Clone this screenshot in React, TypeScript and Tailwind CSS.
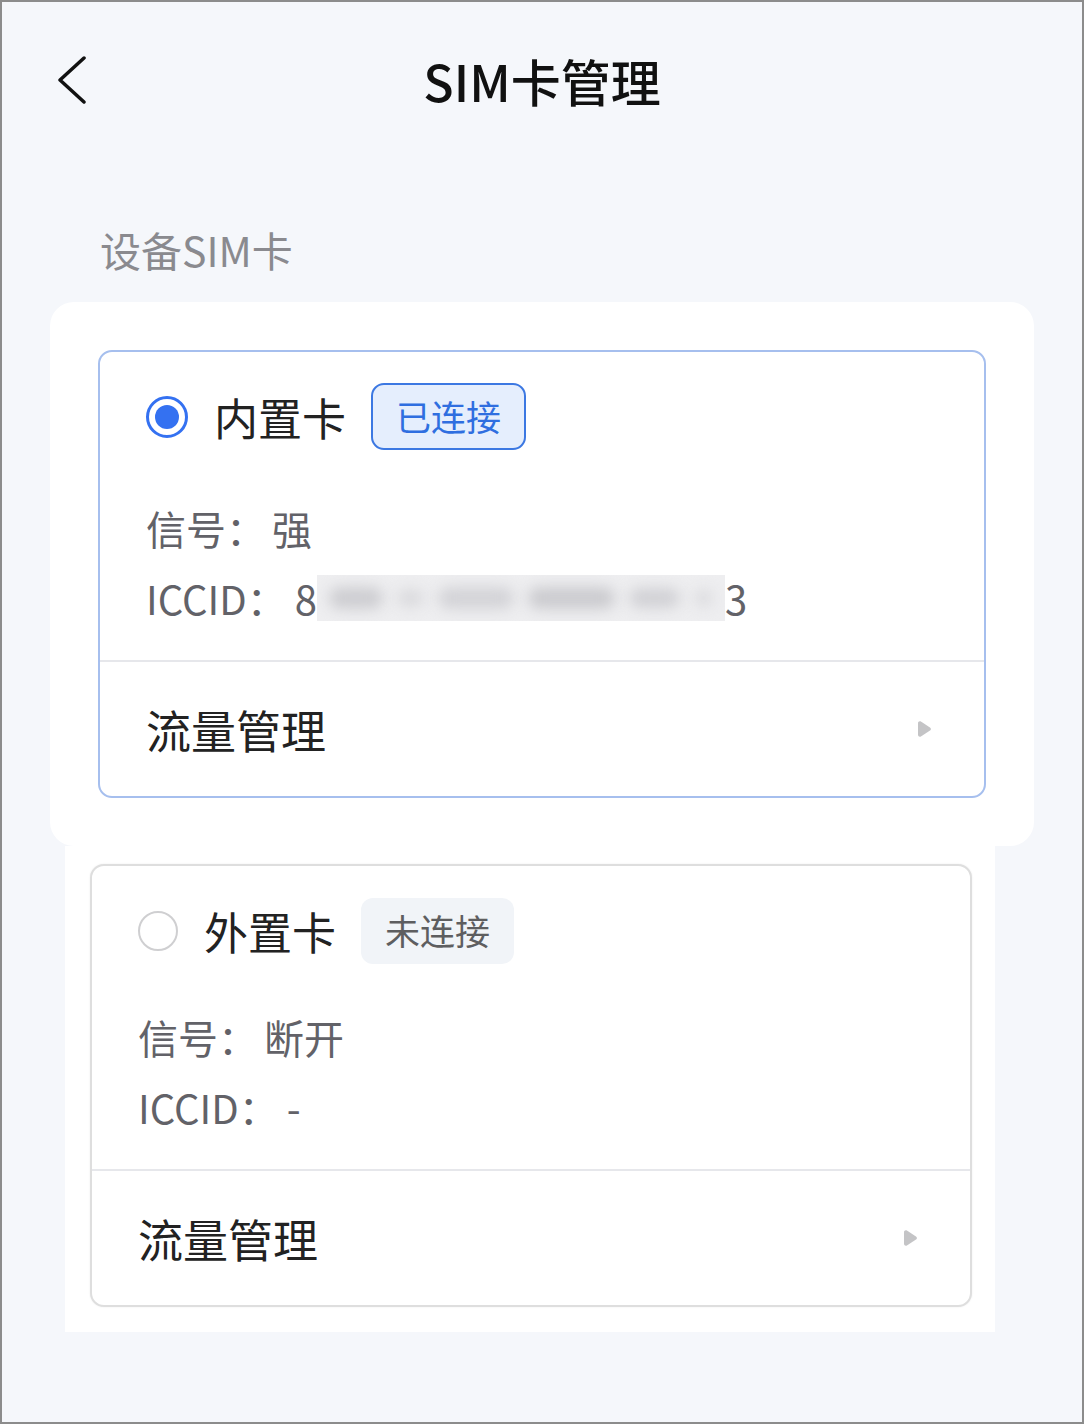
import React from 'react';

const font = { fontFamily: '"Noto Sans CJK SC", "Noto Sans", sans-serif' };

function Triangle() {
  return (
    <svg width="16" height="18" viewBox="0 0 16 18" className="shrink-0">
      <path d="M2 3.2 C2 1.6 3.6 0.8 4.9 1.6 L14 7.4 C15.2 8.2 15.2 9.8 14 10.6 L4.9 16.4 C3.6 17.2 2 16.4 2 14.8 Z" fill="#c4c4c6" />
    </svg>
  );
}

function SimCard({
  name,
  active,
  signal,
  iccid,
}: {
  name: string;
  active: boolean;
  signal: string;
  iccid: React.ReactNode;
}) {
  return (
    <div
      className={`rounded-[14px] border-2 bg-white ${
        active ? 'border-[#a6bfee]' : 'border-[#dedede] shadow-[0_0_2px_rgba(0,0,0,0.08)]'
      }`}
    >
      <div className="px-[46px] pt-[31px] pb-[27px]">
        <div className="flex h-[67px] items-center">
          {active ? (
            <div className="flex h-[42px] w-[42px] items-center justify-center rounded-full border-[3px] border-[#3471f1]">
              <div className="h-[24px] w-[24px] rounded-full bg-[#3471f1]" />
            </div>
          ) : (
            <div className="h-[40px] w-[40px] rounded-full border-2 border-[#cfcfd1]" />
          )}
          <span className="ml-[26px] text-[44px] leading-none text-[#222]">{name}</span>
          {active ? (
            <span className="ml-[25px] flex h-[67px] items-center rounded-[13px] border-2 border-[#3c78e2] bg-[#e5eefd] px-[23px] text-[35px] text-[#2f6ee0]">
              已连接
            </span>
          ) : (
            <span className="ml-[25px] flex h-[66px] items-center rounded-[12px] bg-[#f1f4f8] px-[24px] text-[35px] text-[#5e5e60]">
              未连接
            </span>
          )}
        </div>
        <div
          className={`text-[40px] leading-[70px] text-[#626268] ${active ? 'mt-[43px]' : 'mt-[38px]'}`}
        >
          <div>
            信号：<span className="ml-[6px]">{signal}</span>
          </div>
          <div className="flex items-center">
            ICCID：<span className="ml-[8px]">{iccid}</span>
          </div>
        </div>
      </div>
      <div className="h-[2px] bg-[#e6e7eb]" />
      <div className="flex h-[134px] items-center justify-between pl-[46px] pr-[52px]">
        <span className="text-[45px] leading-none text-[#222]">流量管理</span>
        <Triangle />
      </div>
    </div>
  );
}

function BlurredNumber() {
  return (
    <span className="flex items-center">
      <span>8</span>
      <span className="relative flex h-[46px] w-[408px] items-center gap-[14px] overflow-hidden bg-[#eeeef0] px-[12px]">
        <span className="h-[22px] w-[56px] rounded-full bg-[#cdcdd1] blur-[7px]" />
        <span className="h-[18px] w-[28px] rounded-full bg-[#dadadd] blur-[7px]" />
        <span className="h-[22px] w-[78px] rounded-full bg-[#d3d3d7] blur-[7px]" />
        <span className="h-[22px] w-[90px] rounded-full bg-[#cbcbcf] blur-[7px]" />
        <span className="h-[20px] w-[52px] rounded-full bg-[#d1d1d5] blur-[7px]" />
        <span className="h-[18px] w-[20px] rounded-full bg-[#dcdcdf] blur-[7px]" />
      </span>
      <span>3</span>
    </span>
  );
}

export default function App() {
  return (
    <div
      className="box-border h-[1424px] w-[1084px] overflow-hidden border-2 border-[#8c8c8c] bg-[#f5f7fb]"
      style={font}
    >
      {/* Header */}
      <div className="grid grid-cols-[1fr_auto_1fr] items-center pt-[50px]">
        <div className="pl-[55px]">
          <svg width="30" height="48" viewBox="0 0 30 48">
            <polyline points="27,2 3,24 27,46" fill="none" stroke="#111" strokeWidth="3.5" strokeLinecap="round" strokeLinejoin="round" />
          </svg>
        </div>
        <h1 className="text-[50px] font-medium leading-[56px] text-[#111]">SIM卡管理</h1>
        <div />
      </div>

      <div className="mt-[117px] pl-[98px] text-[41px] leading-[48px] text-[#8a8a8f]">设备SIM卡</div>

      {/* Internal card */}
      <div className="ml-[48px] mt-[29px] w-[984px] rounded-[24px] bg-white p-[48px]">
        <SimCard name="内置卡" active signal="强" iccid={<BlurredNumber />} />
      </div>

      {/* External card */}
      <div className="ml-[63px] w-[930px] bg-white pb-[25px] pl-[25px] pr-[23px] pt-[18px]">
        <SimCard name="外置卡" active={false} signal="断开" iccid="-" />
      </div>
    </div>
  );
}
